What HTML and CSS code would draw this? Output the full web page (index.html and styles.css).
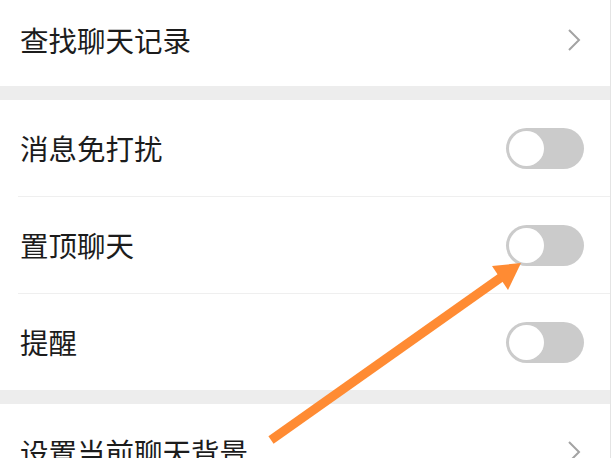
FILE: index.html
```html
<!DOCTYPE html>
<html lang="zh">
<head>
<meta charset="utf-8">
<link rel="stylesheet" href="styles.css">
</head>
<body>
<div class="page">
  <div class="group first">
    <div class="row">
      <span class="label">查找聊天记录</span>
      <svg class="chev" width="14" height="24" viewBox="0 0 14 24"><path d="M2 2 L12 12 L2 22" fill="none" stroke="#a3a3a3" stroke-width="2"/></svg>
    </div>
  </div>
  <div class="gap"></div>
  <div class="group">
    <div class="row">
      <span class="label">消息免打扰</span>
      <span class="toggle"><span class="knob"></span></span>
    </div>
    <div class="row sep">
      <span class="label">置顶聊天</span>
      <span class="toggle"><span class="knob"></span></span>
    </div>
    <div class="row sep">
      <span class="label">提醒</span>
      <span class="toggle"><span class="knob"></span></span>
    </div>
  </div>
  <div class="gap"></div>
  <div class="group">
    <div class="row">
      <span class="label">设置当前聊天背景</span>
      <svg class="chev" width="14" height="24" viewBox="0 0 14 24"><path d="M2 2 L12 12 L2 22" fill="none" stroke="#a3a3a3" stroke-width="2"/></svg>
    </div>
  </div>
  <svg class="arrow" width="612" height="458" viewBox="0 0 612 458">
    <line x1="271" y1="440" x2="503" y2="276" stroke="#ff8b33" stroke-width="9"/>
    <polygon points="521,263 492,266 508,290" fill="#ff8b33"/>
  </svg>
</div>
</body>
</html>
```
FILE: styles.css
```css
html, body {
  margin: 0;
  padding: 0;
  background: #ffffff;
}
body {
  width: 612px;
  height: 458px;
  overflow: hidden;
  font-family: "Noto Sans CJK SC", "Noto Sans", sans-serif;
}
.page {
  position: relative;
  width: 610px;
  height: 458px;
  overflow: hidden;
  border-right: 1px solid #e4e4e4;
  background: #ffffff;
}
.group {
  background: #ffffff;
}
.group.first {
  margin-top: -6px;
}
.group.first .row {
  height: 92px;
}
.row {
  height: 96px;
  display: flex;
  align-items: center;
  justify-content: space-between;
  padding-left: 20px;
  padding-right: 26px;
  box-sizing: border-box;
  position: relative;
}
.row.sep {
  height: 97px;
  border-top: 1px solid #efefef;
  margin-left: 18px;
  padding-left: 2px;
}
.label {
  font-size: 28.5px;
  color: #1c1c1c;
  line-height: 1;
}
.chev {
  margin-right: 3px;
  display: block;
}
.gap {
  height: 14px;
  background: #ededed;
}
.toggle {
  width: 78px;
  height: 41px;
  border-radius: 21px;
  background: #cbcbcb;
  display: flex;
  align-items: center;
  padding-left: 3px;
  box-sizing: border-box;
}
.knob {
  width: 35px;
  height: 35px;
  border-radius: 50%;
  background: #ffffff;
  display: block;
}
.arrow {
  position: absolute;
  left: 0;
  top: 0;
  pointer-events: none;
}
```
